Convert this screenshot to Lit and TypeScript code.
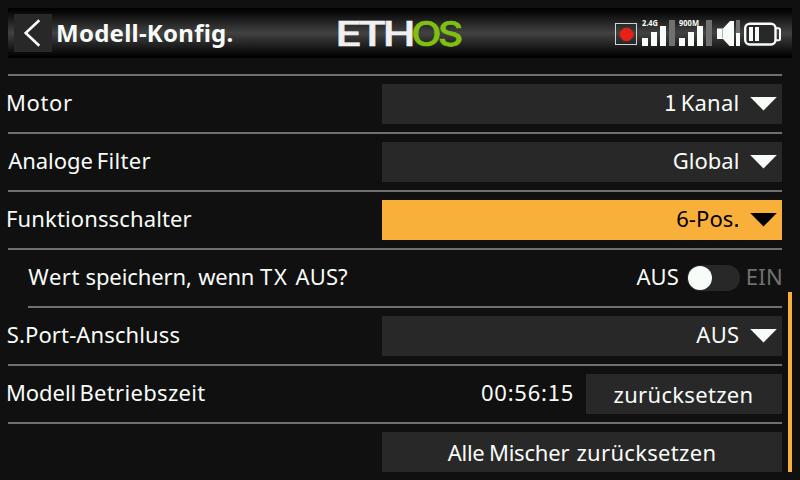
import { LitElement, html, svg, css, nothing } from "lit";
import { customElement, property } from "lit/decorators.js";
import { classMap } from "lit/directives/class-map.js";
import { styleMap } from "lit/directives/style-map.js";

type Word = { t: string; ls?: number; gap?: number };

const SELECTED = "Funktionsschalter";

// text, x, advance, colour
const WORDMARK: [string, number, number, string][] = [
  ["ETH", 335.4, 76.2, "#f0f0f0"],
  ["OS", 411.6, 48, "#80c010"],
];

@customElement("spaced-text")
class SpacedText extends LitElement {
  @property({ attribute: false }) words: Word[] = [];

  static styles = css`
    :host { display: inline-flex; white-space: pre; line-height: 30px; }
    .one { font-family: "Noto Sans CJK SC", sans-serif; line-height: 1; }
  `;

  render() {
    return this.words.map(
      (w) => html`<span style=${styleMap({ letterSpacing: `${w.ls ?? 0}px`, marginLeft: `${w.gap ?? 0}px` })}>${w.t
        .split(/(1)/)
        .filter(Boolean)
        .map((p) => (p === "1" ? html`<span class="one">1</span>` : p))}</span>`,
    );
  }
}

@customElement("choice-field")
class ChoiceField extends LitElement {
  @property({ attribute: false }) words: Word[] = [];
  @property({ type: Boolean }) selected = false;

  static styles = css`
    :host { display: block; width: 400px; }
    .box {
      display: flex; justify-content: flex-end; align-items: center; gap: 10.6px;
      height: 40px; padding-right: 5px; box-sizing: border-box;
      background: #282828; color: #f8fcf8;
    }
    .box.selected { background: #f9b03a; color: #000; }
    .text { padding-bottom: 4px; }
    svg { display: block; fill: currentColor; }
  `;

  render() {
    return html`<div class=${classMap({ box: true, selected: this.selected })}>
      <spaced-text class="text" .words=${this.words}></spaced-text>
      <svg width="27" height="14" viewBox="0 0 27 14"><path d="M.2 0H26.8L13.500 13.500Z" /></svg>
    </div>`;
  }
}

@customElement("app-root")
class AppRoot extends LitElement {
  static styles = css`
    :host {
      display: block; position: relative; width: 800px; height: 480px; overflow: hidden;
      background: #101010; color: #f8fcf8; font: 22px "Noto Sans", sans-serif;
    }
    svg { display: block; flex: none; }
    header {
      display: flex; align-items: center; height: 50px; margin: 0 8px; position: relative;
      background: linear-gradient(#000 0, #040504 6%, #424242 50%, #040504 94%, #000 100%);
    }
    .top { padding-top: 8px; }
    .back { width: 38px; height: 38px; margin-left: 6px; background: #282828; }
    .title { margin-left: 4px; font-size: 24px; font-weight: 700; }
    .logo { position: absolute; left: 328px; top: 0; }
    .status { display: flex; gap: 4px; margin-left: auto; margin-right: 9px; }
    .tiny { font: 700 8px "Noto Sans", sans-serif; fill: #f8fcf8; }
    .mark { font: 500 34px Inter, sans-serif; stroke-width: 0.7; letter-spacing: -3px; }
    .list { margin: 16px 18px 0 8px; border-top: 2px solid #707070; }
    .row {
      display: flex; align-items: center; justify-content: space-between;
      height: 58px; box-sizing: border-box; border-bottom: 2px solid #707070;
    }
    .row:last-child { border-bottom-color: transparent; }
    .row.sub { margin-left: 20px; }
    .label { padding-bottom: 4px; margin-left: -2px; }
    .sub .label { margin-left: 0.3px; }
    .end { display: flex; align-items: center; }
    .end > .text { padding-bottom: 4px; }
    .track {
      width: 53px; height: 26px; margin: 0 5.8px 0 8.2px; border-radius: 13px; background: #282828;
      display: flex; align-items: center;
    }
    .knob { width: 24px; height: 24px; margin-left: 0.7px; border-radius: 50%; background: #f8fcf8; }
    .off { color: #707070; margin-right: -0.9px; }
    .time { margin-right: 12px; }
    .button {
      display: flex; align-items: center; justify-content: center;
      width: 196px; height: 40px; background: #282828;
    }
    .button > * { margin-right: 1px; padding-bottom: 1px; }
    .wide { width: 400px; margin-left: auto; }
    .wide > * { margin-right: 0; }
    .scroll { position: absolute; left: 788px; top: 292px; width: 4px; height: 180px; background: #f9b03a; }
  `;

  private signal(label: string, length: number) {
    return html`<svg width="33" height="50" viewBox="0 8 33 50">
      <rect x="27" y="20" width="6" height="26" fill="#707070" />
      ${[8, 14, 20].map((h, i) => svg`<rect x=${i * 9} y=${46 - h} width="6" height=${h} fill="#f8fcf8" />`)}
      <text class="tiny" x="0" y="26.3" textLength=${length} lengthAdjust="spacingAndGlyphs">${label}</text>
    </svg>`;
  }

  private row(label: Word[], control: unknown, sub = false) {
    return html`<div class=${classMap({ row: true, sub })}>
      ${label.length ? html`<spaced-text class="label" .words=${label}></spaced-text>` : nothing}
      ${control}
    </div>`;
  }

  private choice(label: Word[], value: Word[]) {
    return this.row(
      label,
      html`<choice-field .words=${value} ?selected=${label[0].t === SELECTED}></choice-field>`,
    );
  }

  render() {
    return html`
      <div class="top">
        <header>
          <svg class="back" viewBox="0 0 38 38">
            <path d="M25.3 6.3 11.700 19 25.3 31.7" fill="none" stroke="#f8fcf8" stroke-width="2.6" />
          </svg>
          <spaced-text class="title" .words=${[{ t: "Modell-Konfig.", ls: 0.25 }]}></spaced-text>
          <svg class="logo" width="128" height="50" viewBox="336 8 128 50">
            ${WORDMARK.map(
              ([t, x, w, c]) =>
                svg`<text class="mark" x=${x} y="45.8" fill=${c} stroke=${c} textLength=${w} lengthAdjust="spacingAndGlyphs">${t}</text>`,
            )}
          </svg>
          <div class="status">
            <svg width="23" height="50" viewBox="615 8 23 50">
              <rect x="615.5" y="23.5" width="21" height="21" fill="none" stroke="#d0d4d0" />
              <path d="M624 28.3h5l4 4v4l-4 4.4h-5l-3.8-4.4v-4z" fill="#e82018" stroke="#e82018" stroke-linejoin="round" />
            </svg>
            ${this.signal("2.4G", 16)} ${this.signal("900M", 20)}
            <svg width="24" height="50" viewBox="716 8 24 50">
              <path d="M717 28.5H723L730 21H734V46H729.5L723 39H717Z" fill="#f8fcf8" />
              <path d="M722.5 28.5V38" stroke="#b0b4b0" />
              <rect x="736" y="20" width="4" height="26" fill="#707070" />
              <rect x="736" y="33" width="4" height="13" fill="#f8fcf8" />
            </svg>
            <svg width="39" height="50" viewBox="744 8 39 50">
              <rect x="745.2" y="23.7" width="30.3" height="20.8" rx="4.5" fill="#282828" stroke="#f8fcf8" stroke-width="2.4" />
              <path d="M776 28.2H778.5Q780 28.2 780 29.7V38.7Q780 40.2 778.5 40.2H776" fill="none" stroke="#f8fcf8" stroke-width="2" />
              <path d="M749 27h4v14h-4zM755 27h4v14h-4z" fill="#f8fcf8" />
            </svg>
          </div>
        </header>
      </div>
      <div class="list">
        ${this.choice([{ t: "Motor", ls: 0.62 }], [{ t: "1" }, { t: "Kanal", ls: 0.23, gap: 4.2 }])}
        ${this.choice([{ t: "Analoge", ls: -0.04, gap: 2.2 }, { t: "Filter", ls: 0.32, gap: 4 }], [{ t: "Global", ls: 0.02 }])}
        ${this.choice([{ t: SELECTED, ls: 0.13 }], [{ t: "6-Pos.", ls: 0.09 }])}
        ${this.row(
          [
            { t: "Wert", ls: 0.56 },
            { t: "speichern,", ls: -0.1, gap: 5.5 },
            { t: "wenn", ls: -0.27, gap: 6.5 },
            { t: "TX", ls: 1.77, gap: 5.9 },
            { t: "AUS?", ls: 0.09, gap: 6.9 },
          ],
          html`<div class="end">
            <spaced-text class="text" .words=${[{ t: "AUS", ls: 0 }]}></spaced-text>
            <div class="track"><div class="knob"></div></div>
            <spaced-text class="text off" .words=${[{ t: "EIN", ls: 0.25 }]}></spaced-text>
          </div>`,
          true,
        )}
        ${this.choice([{ t: "S.Port-Anschluss", ls: 0.12, gap: 0.8 }], [{ t: "AUS", ls: 0.3 }])}
        ${this.row(
          [{ t: "Modell", ls: -0.08 }, { t: "Betriebszeit", ls: 0.32, gap: 3.4 }],
          html`<div class="end">
            <spaced-text class="text time" .words=${[{ t: "00:56:15", ls: 0.76 }]}></spaced-text>
            <div class="button"><spaced-text .words=${[{ t: "zurücksetzen", ls: 0.31 }]}></spaced-text></div>
          </div>`,
        )}
        ${this.row(
          [],
          html`<div class="button wide">
            <spaced-text
              .words=${[
                { t: "Alle", ls: -0.24 },
                { t: "Mischer", ls: -0.21, gap: 4.4 },
                { t: "zurücksetzen", ls: 0.31, gap: 7.2 },
              ]}
            ></spaced-text>
          </div>`,
        )}
      </div>
      <div class="scroll"></div>
    `;
  }
}
